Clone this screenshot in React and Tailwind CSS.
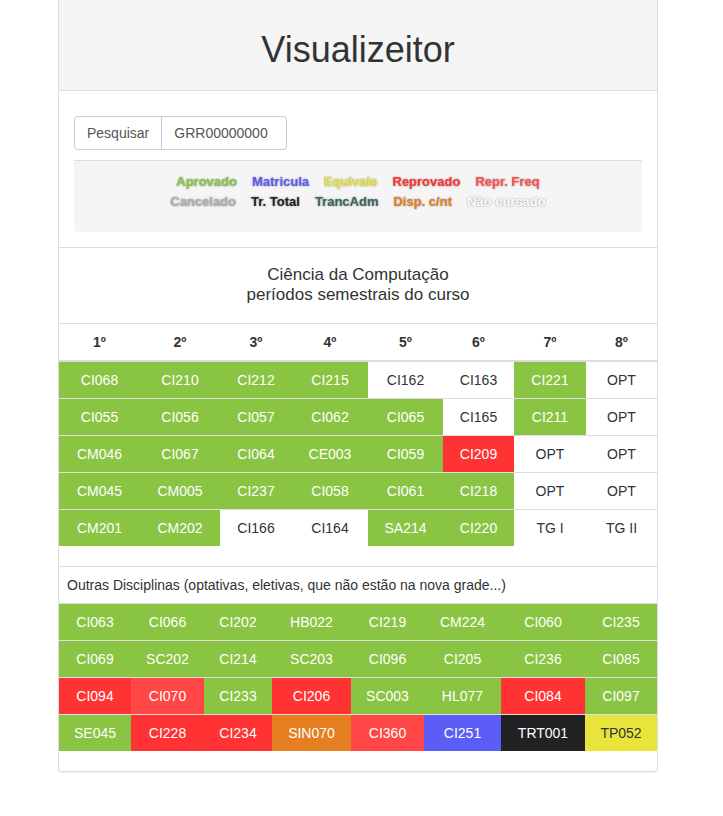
const GREEN = 'bg-[#8ac443] text-white';
const WHITE = 'bg-white text-[#333]';
const RED = 'bg-[#ff3333] text-white';
const FREQ = 'bg-[#ff4747] text-white';
const ORANGE = 'bg-[#e67e22] text-white';
const BLUE = 'bg-[#5c5cf6] text-white';
const BLACK = 'bg-[#222222] text-white';
const YELLOW = 'bg-[#e8e43c] text-[#333]';

const cls = { G: GREEN, W: WHITE, R: RED, F: FREQ, O: ORANGE, B: BLUE, K: BLACK, Y: YELLOW };

const mainCols = 'grid-cols-[81px_80px_72px_76px_75px_71px_72px_71px]';
const otherCols = 'grid-cols-[72px_73px_68px_79px_73px_77px_84px_72px]';

const semesters = ['1º', '2º', '3º', '4º', '5º', '6º', '7º', '8º'];

const mainRows = [
  [['CI068', 'G'], ['CI210', 'G'], ['CI212', 'G'], ['CI215', 'G'], ['CI162', 'W'], ['CI163', 'W'], ['CI221', 'G'], ['OPT', 'W']],
  [['CI055', 'G'], ['CI056', 'G'], ['CI057', 'G'], ['CI062', 'G'], ['CI065', 'G'], ['CI165', 'W'], ['CI211', 'G'], ['OPT', 'W']],
  [['CM046', 'G'], ['CI067', 'G'], ['CI064', 'G'], ['CE003', 'G'], ['CI059', 'G'], ['CI209', 'R'], ['OPT', 'W'], ['OPT', 'W']],
  [['CM045', 'G'], ['CM005', 'G'], ['CI237', 'G'], ['CI058', 'G'], ['CI061', 'G'], ['CI218', 'G'], ['OPT', 'W'], ['OPT', 'W']],
  [['CM201', 'G'], ['CM202', 'G'], ['CI166', 'W'], ['CI164', 'W'], ['SA214', 'G'], ['CI220', 'G'], ['TG I', 'W'], ['TG II', 'W']],
];

const otherRows = [
  [['CI063', 'G'], ['CI066', 'G'], ['CI202', 'G'], ['HB022', 'G'], ['CI219', 'G'], ['CM224', 'G'], ['CI060', 'G'], ['CI235', 'G']],
  [['CI069', 'G'], ['SC202', 'G'], ['CI214', 'G'], ['SC203', 'G'], ['CI096', 'G'], ['CI205', 'G'], ['CI236', 'G'], ['CI085', 'G']],
  [['CI094', 'R'], ['CI070', 'F'], ['CI233', 'G'], ['CI206', 'R'], ['SC003', 'G'], ['HL077', 'G'], ['CI084', 'R'], ['CI097', 'G']],
  [['SE045', 'G'], ['CI228', 'R'], ['CI234', 'R'], ['SIN070', 'O'], ['CI360', 'F'], ['CI251', 'B'], ['TRT001', 'K'], ['TP052', 'Y']],
];

const legendTop = [
  ['Aprovado', 'text-[#8ac443]'],
  ['Matricula', 'text-[#5c5cf6]'],
  ['Equivale', 'text-[#e8e43c]'],
  ['Reprovado', 'text-[#ff3333]'],
  ['Repr. Freq', 'text-[#ff5050]'],
];
const legendBottom = [
  ['Cancelado', 'text-[#b0b0b0]'],
  ['Tr. Total', 'text-[#222222]'],
  ['TrancAdm', 'text-[#3d6660]'],
  ['Disp. c/nt', 'text-[#e67e22]'],
  ['Não cursado', 'text-white'],
];

function LegendLine({ items }) {
  return (
    <div className="flex justify-center gap-x-[15px] leading-[20px]">
      {items.map(([label, color]) => (
        <span key={label} className={`${color} font-bold text-[13px] [text-shadow:0_0_2px_#888]`}>
          {label}
        </span>
      ))}
    </div>
  );
}

function Row({ cells, cols, first }) {
  return (
    <div className={`grid ${cols} ${first ? '' : 'border-t border-[#ddd]'}`}>
      {cells.map(([code, c], i) => (
        <div key={i} className={`${cls[c]} py-[8px] leading-[20px] text-center text-[14px]`}>
          {code}
        </div>
      ))}
    </div>
  );
}

export default function App() {
  return (
    <div className="min-h-[816px] bg-white font-['Liberation_Sans',Arial,sans-serif] text-[#333]">
      <div className="ml-[58px] w-[600px] border border-[#ddd] border-t-0 rounded-b-[4px] shadow-[0_1px_1px_rgba(0,0,0,0.05)] bg-white">
        {/* Heading */}
        <div className="bg-[#f5f5f5] border-b border-[#ddd] h-[91px] flex items-center justify-center pt-[10px]">
          <h1 className="text-[36px] leading-[40px] text-[#333]">Visualizeitor</h1>
        </div>

        {/* Search + legend */}
        <div className="px-[15px] pt-[25px] pb-[15px] border-b border-[#ddd]">
          <div className="flex h-[34px] w-[213px] text-[14px]">
            <div className="flex items-center px-[12px] border border-[#ccc] rounded-l-[4px] text-[#555]">Pesquisar</div>
            <input
              className="w-[125px] border border-l-0 border-[#ccc] rounded-r-[4px] px-[12px] text-[14px] placeholder:text-[#555] outline-none"
              placeholder="GRR00000000"
            />
          </div>
          <div className="mt-[10px] bg-[#f5f5f5] border-t border-[#ddd] rounded-b-[4px] pt-[11px] pb-[20px]">
            <LegendLine items={legendTop} />
            <LegendLine items={legendBottom} />
          </div>
        </div>

        {/* Course title */}
        <div className="pt-[17px] pb-[18px] text-center text-[17px] leading-[20px] text-[#333] border-b border-[#ddd]">
          <div>Ciência da Computação</div>
          <div>períodos semestrais do curso</div>
        </div>

        {/* Main table */}
        <div className={`grid ${mainCols} border-b-2 border-[#ddd]`}>
          {semesters.map((s) => (
            <div key={s} className="py-[8px] leading-[20px] text-center text-[14px] font-bold">{s}</div>
          ))}
        </div>
        {mainRows.map((r, i) => (
          <Row key={i} cells={r} cols={mainCols} first={i === 0} />
        ))}

        {/* Other disciplines */}
        <div className="mt-[20px] border-t border-[#ddd] mb-[20px]">
          <div className="px-[8px] py-[8px] leading-[20px] text-[14px] text-[#333]">
            Outras Disciplinas (optativas, eletivas, que não estão na nova grade...)
          </div>
          {otherRows.map((r, i) => (
            <Row key={i} cells={r} cols={otherCols} />
          ))}
        </div>
      </div>
    </div>
  );
}
